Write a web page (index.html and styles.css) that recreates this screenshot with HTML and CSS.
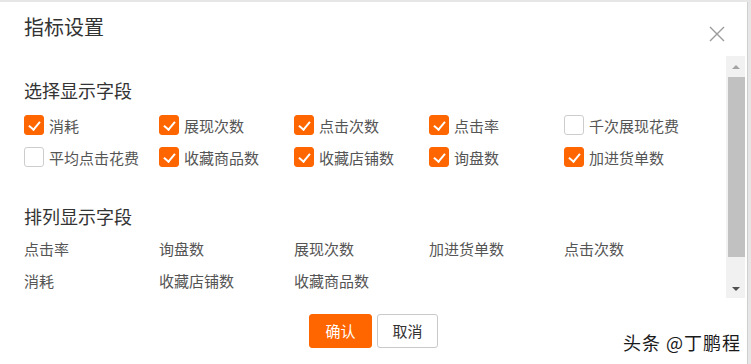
FILE: index.html
```html
<!DOCTYPE html>
<html lang="zh-CN">
<head>
    <meta charset="UTF-8">
    <title>指标设置</title>
    <link rel="stylesheet" href="styles.css">
</head>
<body>
    <div class="dialog">
        <div class="dialog-header">
            <h2 class="dialog-title">指标设置</h2>
            <button class="close-btn" aria-label="关闭">
                <svg width="16" height="16" viewBox="0 0 16 16">
                    <path d="M1 1 L15 15 M15 1 L1 15" stroke="#9a9a9a" stroke-width="1.4" fill="none"/>
                </svg>
            </button>
        </div>

        <div class="dialog-body">
            <div class="body-content">
                <!-- 选择显示字段 -->
                <div class="section">
                    <h3 class="section-title">选择显示字段</h3>
                    <div class="field-grid">
                        <label class="field checked"><span class="box"></span>消耗</label>
                        <label class="field checked"><span class="box"></span>展现次数</label>
                        <label class="field checked"><span class="box"></span>点击次数</label>
                        <label class="field checked"><span class="box"></span>点击率</label>
                        <label class="field"><span class="box"></span>千次展现花费</label>
                        <label class="field"><span class="box"></span>平均点击花费</label>
                        <label class="field checked"><span class="box"></span>收藏商品数</label>
                        <label class="field checked"><span class="box"></span>收藏店铺数</label>
                        <label class="field checked"><span class="box"></span>询盘数</label>
                        <label class="field checked"><span class="box"></span>加进货单数</label>
                    </div>
                </div>

                <!-- 排列显示字段 -->
                <div class="section section-order">
                    <h3 class="section-title">排列显示字段</h3>
                    <div class="field-grid order-grid">
                        <div class="order-item">点击率</div>
                        <div class="order-item">询盘数</div>
                        <div class="order-item">展现次数</div>
                        <div class="order-item">加进货单数</div>
                        <div class="order-item">点击次数</div>
                        <div class="order-item">消耗</div>
                        <div class="order-item">收藏店铺数</div>
                        <div class="order-item">收藏商品数</div>
                    </div>
                </div>
            </div>

            <div class="scrollbar">
                <div class="scroll-btn"><span class="arrow-up"></span></div>
                <div class="scroll-thumb"></div>
                <div class="scroll-track"></div>
                <div class="scroll-btn"><span class="arrow-down"></span></div>
            </div>
        </div>

        <div class="dialog-footer">
            <button class="btn btn-primary">确认</button>
            <button class="btn btn-default">取消</button>
        </div>
    </div>

    <div class="watermark">头条 @丁鹏程</div>
</body>
</html>
```

FILE: styles.css
```css
* {
    margin: 0;
    padding: 0;
    box-sizing: border-box;
}

body {
    font-family: "Noto Sans CJK SC", "Liberation Sans", sans-serif;
    background: #e6e6e6;
    width: 751px;
    height: 364px;
    overflow: hidden;
    position: relative;
    color: #333;
}

.dialog {
    width: 747px;
    height: 362px;
    margin-top: 2px;
    background: #fff;
    box-shadow: 1px 0 0 #cfcfcf;
    display: flex;
    flex-direction: column;
}

.dialog-header {
    height: 54px;
    display: flex;
    justify-content: space-between;
    align-items: flex-start;
    padding: 0 22px 0 24px;
}

.dialog-title {
    font-size: 20px;
    font-weight: normal;
    line-height: 28px;
    padding-top: 11px;
    color: #333;
}

.close-btn {
    margin-top: 24px;
    width: 16px;
    height: 16px;
    border: none;
    background: none;
    display: block;
}

.close-btn svg {
    display: block;
}

.dialog-body {
    height: 242px;
    display: flex;
    padding-right: 2px;
}

.body-content {
    flex: 1;
    overflow: hidden;
    padding: 22px 0 0 24px;
}

.section-title {
    font-size: 18px;
    font-weight: normal;
    line-height: 24px;
    color: #333;
}

.field-grid {
    display: grid;
    grid-template-columns: repeat(5, 135px);
    grid-auto-rows: 32px;
    margin-top: 7px;
}

.field {
    display: flex;
    align-items: center;
    gap: 5px;
    font-size: 15px;
    color: #555;
}

.box {
    width: 20px;
    height: 20px;
    border: 1px solid #cdcdcd;
    border-radius: 3px;
    background: #fff;
    position: relative;
    flex-shrink: 0;
}

.field.checked .box {
    background: #ff6600;
    border-color: #ff6600;
}

.field.checked .box::after {
    content: "";
    position: absolute;
    left: 6px;
    top: 3px;
    width: 5px;
    height: 9px;
    border: solid #fff;
    border-width: 0 2px 2px 0;
    transform: rotate(40deg);
}

.section-order {
    margin-top: 31px;
}

.order-grid {
    margin-top: 4px;
}

.order-item {
    display: flex;
    align-items: center;
    font-size: 15px;
    color: #555;
}

.scrollbar {
    width: 19px;
    background: #f1f1f1;
    display: flex;
    flex-direction: column;
}

.scroll-btn {
    height: 18px;
    display: flex;
    align-items: center;
    justify-content: center;
}

.scroll-btn:first-child {
    height: 21px;
}

.arrow-up {
    border-left: 4px solid transparent;
    border-right: 4px solid transparent;
    border-bottom: 4px solid #a3a3a3;
}

.arrow-down {
    border-left: 4px solid transparent;
    border-right: 4px solid transparent;
    border-top: 4px solid #505050;
}

.scroll-thumb {
    height: 180px;
    margin-left: 2px;
    background: #c1c1c1;
}

.scroll-track {
    flex: 1;
}

.dialog-footer {
    flex: 1;
    display: flex;
    justify-content: center;
    align-items: flex-start;
    gap: 5px;
    padding-top: 16px;
}

.btn {
    height: 34px;
    padding: 0;
    font-family: inherit;
    font-size: 15px;
    line-height: 32px;
    white-space: nowrap;
    border-radius: 3px;
    cursor: pointer;
}

.btn-primary {
    width: 63px;
    background: #ff6600;
    border: 1px solid #ff6600;
    color: #fff;
}

.btn-default {
    width: 61px;
    background: #fff;
    border: 1px solid #c9c9c9;
    color: #333;
}

.watermark {
    position: absolute;
    right: 10px;
    top: 330px;
    font-size: 18px;
    line-height: 24px;
    color: #1a1a1a;
    letter-spacing: 1px;
    text-shadow: 0 0 2px #fff, 0 0 2px #fff;
}
```
